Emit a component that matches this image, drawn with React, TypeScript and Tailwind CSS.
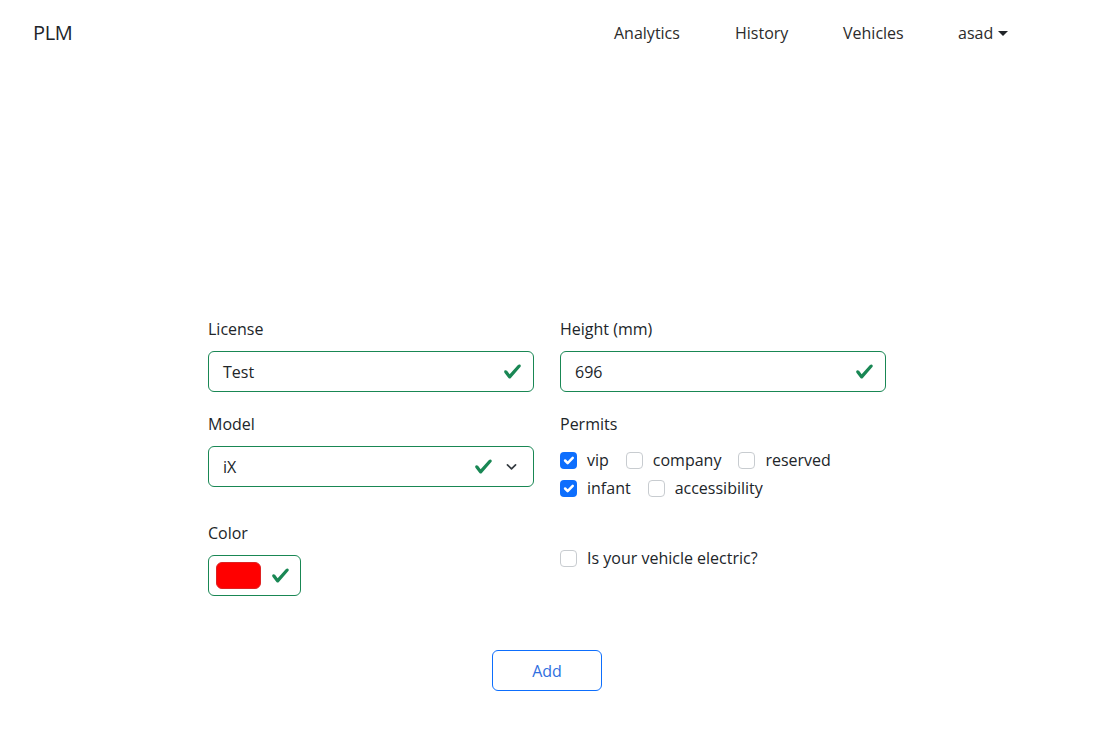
import React from "react";

const Check = ({ className = "" }: { className?: string }) => (
  <svg viewBox="0 0 8 8" className={className} aria-hidden="true">
    <path
      fill="#198754"
      d="M2.3 6.73.6 4.53c-.4-1.04.46-1.4 1.1-.8l1.1 1.4 3.4-3.8c.6-.63 1.6-.27 1.2.7l-4 4.6c-.43.5-.8.4-1.1.1z"
    />
  </svg>
);

const Chevron = () => (
  <svg viewBox="0 0 16 16" className="w-[13px] h-[13px]" aria-hidden="true">
    <path d="m3 6 5 5 5-5" fill="none" stroke="#343a40" strokeWidth="2" strokeLinecap="round" strokeLinejoin="round" />
  </svg>
);

const Box = ({ checked, label }: { checked?: boolean; label: string }) => (
  <label className="flex items-center h-[28px] mr-[17px]">
    {checked ? (
      <span className="w-[17px] h-[17px] rounded-[4px] bg-[#0d6efd] flex items-center justify-center">
        <svg viewBox="0 0 20 20" className="w-[17px] h-[17px]">
          <path d="m6 10 3 3 6-6" fill="none" stroke="#fff" strokeWidth="3" strokeLinecap="round" strokeLinejoin="round" />
        </svg>
      </span>
    ) : (
      <span className="w-[17px] h-[17px] rounded-[4px] border border-[#c8ccd0] bg-white" />
    )}
    <span className="ml-[10px]">{label}</span>
  </label>
);

export default function App() {
  return (
    <div
      className="min-h-[734px] bg-white text-[#212529] text-[16px] leading-6"
      style={{ fontFamily: '"Open Sans", "Noto Sans", Arial, sans-serif' }}
    >
      <nav className="flex items-center h-[66px]">
        <div className="ml-[33px] w-[581px] text-[20px] tracking-[-0.3px]">PLM</div>
        <ul className="flex items-center text-[#2b2b2b]">
          <li className="w-[121px]">Analytics</li>
          <li className="w-[108px]">History</li>
          <li className="w-[115px]">Vehicles</li>
          <li className="flex items-center">
            asad
            <span className="ml-[5px] w-0 h-0 border-x-[5px] border-x-transparent border-t-[5px] border-t-[#212529]" />
          </li>
        </ul>
      </nav>

      <form className="ml-[208px] w-[678px] mt-[251px]">
        <div className="grid grid-cols-[326px_326px] gap-x-[26px]">
          <div>
            <div className="mb-[10px]">License</div>
            <div className="h-[41px] border border-[#198754] rounded-[6px] flex items-center pl-[14px] pr-[11px]">
              <span className="flex-1">Test</span>
              <Check className="w-[19px] h-[19px]" />
            </div>
          </div>
          <div>
            <div className="mb-[10px]">Height (mm)</div>
            <div className="h-[41px] border border-[#198754] rounded-[6px] flex items-center pl-[14px] pr-[11px]">
              <span className="flex-1">696</span>
              <Check className="w-[19px] h-[19px]" />
            </div>
          </div>

          <div className="mt-[20px]">
            <div className="mb-[10px]">Model</div>
            <div className="h-[41px] border border-[#198754] rounded-[6px] flex items-center pl-[14px] pr-[15px]">
              <span className="flex-1">iX</span>
              <Check className="w-[19px] h-[19px]" />
              <span className="ml-[12px] flex items-center">
                <Chevron />
              </span>
            </div>
          </div>
          <div className="mt-[20px]">
            <div className="mb-[10px]">Permits</div>
            <div className="flex">
              <Box checked label="vip" />
              <Box label="company" />
              <Box label="reserved" />
            </div>
            <div className="flex">
              <Box checked label="infant" />
              <Box label="accessibility" />
            </div>
          </div>

          <div className="mt-[19px]">
            <div className="mb-[10px]">Color</div>
            <div className="w-[93px] h-[41px] border border-[#198754] rounded-[6px] flex items-center pl-[7px]">
              <span className="w-[45px] h-[27px] rounded-[6px] bg-[#ff0000] border border-[#d22]" />
              <Check className="ml-[10px] w-[19px] h-[19px]" />
            </div>
          </div>
          <div className="mt-[19px]">
            <div className="mt-[25px] flex items-center">
              <span className="w-[17px] h-[17px] rounded-[4px] border border-[#c8ccd0] bg-white" />
              <span className="ml-[10px]">Is your vehicle electric?</span>
            </div>
          </div>
        </div>

        <div className="flex justify-center mt-[54px]">
          <button
            type="button"
            className="w-[110px] h-[41px] border border-[#0d6efd] rounded-[6px] text-[#2f6fe0] bg-white"
          >
            Add
          </button>
        </div>
      </form>
    </div>
  );
}
